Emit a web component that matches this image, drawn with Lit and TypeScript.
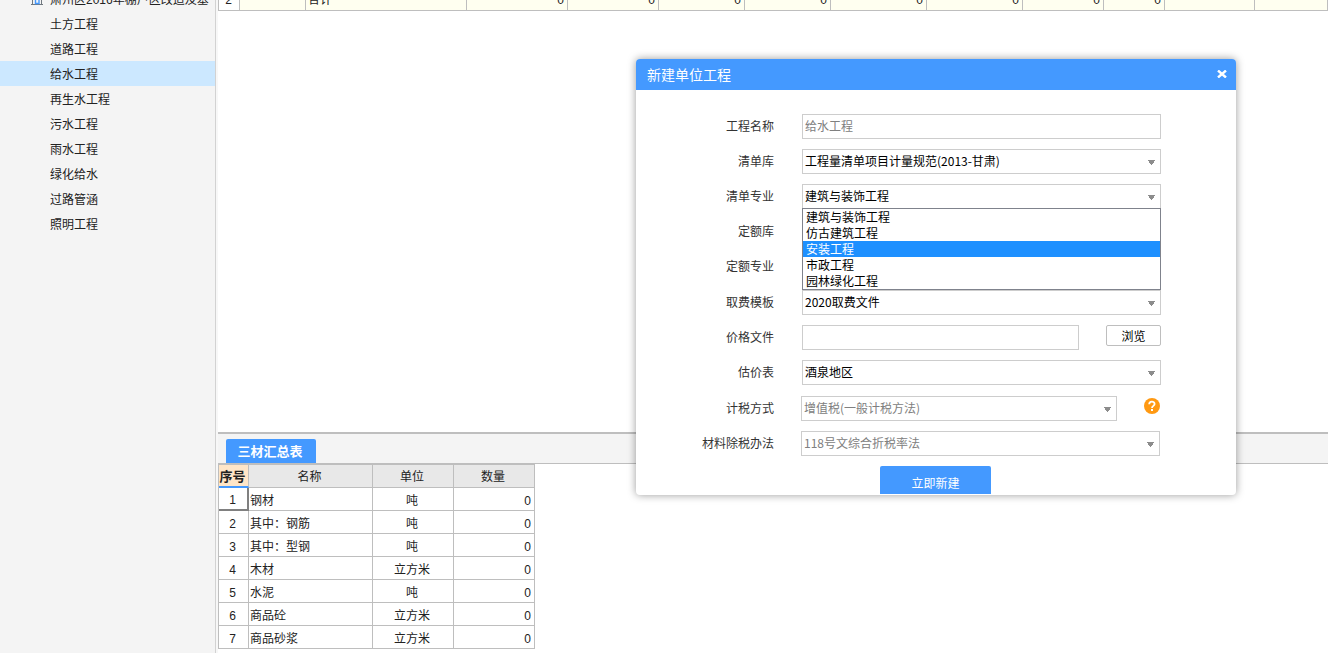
import { LitElement, html, css, svg, nothing } from "lit";
import { customElement, property, state } from "lit/decorators.js";
import { classMap } from "lit/directives/class-map.js";

const PROJECT = "肃州区2016年棚户区改造及基";
const UNITS = ["土方工程", "道路工程", "给水工程", "再生水工程", "污水工程", "雨水工程", "绿化给水", "过路管涵", "照明工程"];
const MATERIALS: [string, string, number][] = [
  ["钢材", "吨", 0],
  ["其中：钢筋", "吨", 0],
  ["其中：型钢", "吨", 0],
  ["木材", "立方米", 0],
  ["水泥", "吨", 0],
  ["商品砼", "立方米", 0],
  ["商品砂浆", "立方米", 0],
];
const SPECIALTIES = ["建筑与装饰工程", "仿古建筑工程", "安装工程", "市政工程", "园林绿化工程"];

const caret = svg`<path d="M0 0h7v1h-1v2h-1v1h-1v1h-1v-1h-1v-1h-1v-2h-1z" fill="#8c8c8c"/>`;

@customElement("project-tree")
export class ProjectTree extends LitElement {
  @state() private selected = "给水工程";

  static styles = css`
    :host { display: block; flex: none; width: 215px; overflow: hidden; background: #f4f4f4; border-right: 1px solid #d2d2d2; }
    .tree { margin: -14px 0 0; padding: 0; list-style: none; }
    .row { display: flex; align-items: center; box-sizing: border-box; height: 25px; padding: 4px 0 0 50px; color: #222; font-size: 12px; line-height: 21px; white-space: nowrap; cursor: default; }
    .root { padding-left: 31px; gap: 7px; }
    .icon { width: 12px; height: 13px; flex: none; margin-bottom: 4px; }
    .selected { background: #cce8ff; }
  `;

  render() {
    return html`<ul class="tree" role="tree">
      <li class="row root" role="treeitem">
        <svg class="icon" viewBox="0 0 12 13" fill="none" aria-hidden="true">
          <path d="M0 12.500H12M1.500 12V1.500H10.500V12" stroke="#70787f" />
          <path d="M4.500 11.500V5.500H8V11.500Z" stroke="#4499ff" stroke-width="1.400" />
        </svg>
        <span>${PROJECT}</span>
      </li>
      ${UNITS.map(
        (u) => html`<li
          role="treeitem"
          class=${classMap({ row: true, selected: u === this.selected })}
          @click=${() => (this.selected = u)}
        >${u}</li>`
      )}
    </ul>`;
  }
}

@customElement("cost-sheet")
export class CostSheet extends LitElement {
  static styles = css`
    :host { display: block; flex: 1; min-height: 0; overflow: hidden; background: #fff; }
    .sheet { width: 100%; margin-top: -13px; table-layout: fixed; border-collapse: separate; border-spacing: 0; border-left: 1px solid #bebebe; }
    td { height: 24px; box-sizing: border-box; padding: 4px 3px 0 2px; border: solid #bebebe; border-width: 0 1px 1px 0; background: #fffff0; color: #222; font-size: 12px; line-height: 19px; text-align: right; }
    .no { background: #fff; text-align: center; }
    .name { text-align: left; }
    .c21 { width: 21px; } .c66 { width: 66px; } .c161 { width: 161px; } .c101 { width: 101px; }
    .c91 { width: 91px; } .c86 { width: 86px; } .c96 { width: 96px; } .c81 { width: 81px; }
    .c61 { width: 61px; } .c90 { width: 90px; }
  `;

  render() {
    const cols = [21, 66, 161, 101, 91, 86, 86, 96, 96, 81, 61, 90];
    return html`<table class="sheet">
      <colgroup>${cols.map((c) => html`<col class="c${c}" />`)}<col /></colgroup>
      <tbody>
        <tr>
          <td class="no">2</td><td></td><td class="name">合计</td>
          ${Array.from({ length: 8 }, () => html`<td>0</td>`)}
          <td></td><td></td>
        </tr>
      </tbody>
    </table>`;
  }
}

@customElement("material-summary")
export class MaterialSummary extends LitElement {
  static styles = css`
    :host { display: block; flex: none; padding-bottom: 4px; background: #fff; border-top: 2px solid #bebebe; }
    .tabs { display: flex; padding: 5px 8px 0; background: #f4f4f4; border-bottom: 1px solid #bebebe; }
    .tab { height: 24px; width: 90px; padding: 2px 2px 0 0; border: 0; border-radius: 2px 2px 0 0; background: #4499ff; color: #fff; font-family: inherit; font-size: 13px; font-weight: bold; line-height: 22px; }
    table { width: 317px; table-layout: fixed; border-collapse: separate; border-spacing: 0; border: solid #bebebe; border-width: 1px 0 0 1px; color: #222; font-size: 12px; }
    th, td { box-sizing: border-box; height: 23px; border: solid #bebebe; border-width: 0 1px 1px 0; }
    th { padding: 2px 2px 0 0; background: #e8e8e8; font-weight: normal; line-height: 20px; }
    td { padding: 4px 3px 0 1px; line-height: 18px; }
    .seq { width: 30px; }
    .name { width: 124px; }
    .unit, .qty { width: 81px; }
    .active { background: #ffe6c8; border-bottom: 2px solid #4499ff; font-size: 13px; font-weight: bold; line-height: 19px; white-space: nowrap; }
    .center { text-align: center; }
    .right { text-align: right; }
    .current { padding-right: 2px; border: solid #808080; border-width: 0 2px 2px 0; line-height: 17px; }
  `;

  render() {
    return html`
      <div class="tabs" role="tablist">
        <button class="tab" role="tab" aria-selected="true">三材汇总表</button>
      </div>
      <table>
        <thead>
          <tr><th class="seq active">序号</th><th class="name">名称</th><th class="unit">单位</th><th class="qty">数量</th></tr>
        </thead>
        <tbody>
          ${MATERIALS.map(
            ([name, unit, qty], i) => html`<tr>
              <td class=${classMap({ center: true, current: i === 0 })}>${i + 1}</td>
              <td>${name}</td>
              <td class="center">${unit}</td>
              <td class="right">${qty}</td>
            </tr>`
          )}
        </tbody>
      </table>
    `;
  }
}

@customElement("unit-dialog")
export class UnitDialog extends LitElement {
  @property({ type: Array }) specialties = SPECIALTIES;
  @state() private hovered = 2;

  static styles = css`
    :host { display: block; width: 600px; border-radius: 4px; background: #fff; box-shadow: 0 0 8px rgba(0, 0, 0, 0.4); color: #333; }
    .head { display: flex; align-items: center; justify-content: space-between; height: 31px; padding: 0 9px 0 11px; border-radius: 4px 4px 0 0; background: #4499ff; color: #fff; }
    .title { margin: 0; font-size: 14px; font-weight: normal; line-height: 31px; }
    button { font-family: inherit; font-size: 12px; }
    .close { display: flex; padding: 0 0 2px; border: 0; background: none; }
    .form { display: grid; gap: 11px; padding-top: 24px; }
    .group { display: grid; grid-template-columns: 138px 1fr; gap: 10px 28px; padding-right: 75px; }
    .tax { column-gap: 27px; padding-right: 76px; }
    label { font-size: 12px; line-height: 23px; text-align: right; white-space: nowrap; }
    .control { position: relative; height: 25px; min-width: 0; }
    .split { display: flex; align-items: flex-start; justify-content: space-between; gap: 27px; }
    .split .grow { flex: 1; }
    input, select { display: block; width: 100%; height: 25px; box-sizing: border-box; margin: 0; padding: 0 2px 2px; border: 1px solid #cdcdcd; border-radius: 0; background: #fff; color: #000; font-family: inherit; font-size: 12px; line-height: 21px; appearance: none; outline: 0; opacity: 1; }
    :disabled { color: #808080; }
    .caret { position: absolute; right: 6px; top: 11px; width: 7px; height: 5px; pointer-events: none; }
    .list { position: absolute; z-index: 1; top: 24px; left: 0; right: 0; margin: 0; padding: 0; border: 1px solid #7f828c; background: #fff; color: #000; list-style: none; font-size: 12px; line-height: 16px; }
    .item { height: 16px; padding-left: 3px; }
    .hover { background: #1e90ff; color: #fff; }
    .browse { width: 55px; height: 21px; padding: 0; border: 1px solid #bebebe; border-radius: 2px; background: #fff; color: #000; line-height: 19px; }
    .help { display: flex; padding: 2px 0 0; border: 0; background: none; }
    .foot { display: flex; justify-content: center; height: 28px; margin: 10px 1px 1px 0; overflow: hidden; }
    .submit { flex: none; width: 111px; height: 33px; padding: 0; border: 0; border-radius: 2px; background: #4499ff; color: #fff; }
  `;

  private select(id: string, value = "", disabled = false, list: string[] = []) {
    return html`<div class="control grow">
      <select id=${id} ?disabled=${disabled}>${value ? html`<option>${value}</option>` : nothing}</select>
      <svg class="caret" viewBox="0 0 7 5" shape-rendering="crispEdges" aria-hidden="true">${caret}</svg>
      ${list.length
        ? html`<ul class="list" role="listbox">
            ${list.map(
              (t, i) => html`<li
                role="option"
                class=${classMap({ item: true, hover: i === this.hovered })}
                @mouseenter=${() => (this.hovered = i)}
              >${t}</li>`
            )}
          </ul>`
        : nothing}
    </div>`;
  }

  render() {
    return html`
      <header class="head">
        <h2 class="title">新建单位工程</h2>
        <button class="close" aria-label="关闭">
          <svg width="10" height="8" viewBox="0 0 10 8" aria-hidden="true">
            <path d="M1 0.500L9 7.500M9 0.500L1 7.500" stroke="#fff" stroke-width="2.400" />
          </svg>
        </button>
      </header>
      <form class="form" @submit=${(e: Event) => e.preventDefault()}>
        <div class="group">
          <label for="name">工程名称</label>
          <div class="control"><input id="name" value="给水工程" disabled /></div>
          <label for="bill">清单库</label>
          ${this.select("bill", "工程量清单项目计量规范(2013-甘肃)")}
          <label for="specialty">清单专业</label>
          ${this.select("specialty", "建筑与装饰工程", false, this.specialties)}
          <label for="quota">定额库</label>
          ${this.select("quota")}
          <label for="quota-specialty">定额专业</label>
          ${this.select("quota-specialty")}
        </div>
        <div class="group">
          <label for="fee">取费模板</label>
          ${this.select("fee", "2020取费文件")}
          <label for="price">价格文件</label>
          <div class="split">
            <div class="control grow"><input id="price" /></div>
            <button class="browse" type="button">浏览</button>
          </div>
          <label for="estimate">估价表</label>
          ${this.select("estimate", "酒泉地区")}
        </div>
        <div class="group tax">
          <label for="tax">计税方式</label>
          <div class="split">
            ${this.select("tax", "增值税(一般计税方法)", true)}
            <button class="help" type="button" aria-label="帮助">
              <svg width="16" height="16" viewBox="0 0 16 16" fill="none" aria-hidden="true">
                <circle cx="8" cy="8" r="8" fill="#ff9912" />
                <path d="M5.200 6.300C5.200 2.900 10.600 2.900 10.600 6C10.600 7.900 8 7.900 8 10" stroke="#fff" stroke-width="1.800" />
                <path d="M7 11h2v2h-2z" fill="#fff" />
              </svg>
            </button>
          </div>
          <label for="deduct">材料除税办法</label>
          ${this.select("deduct", "118号文综合折税率法", true)}
        </div>
      </form>
      <footer class="foot"><button class="submit">立即新建</button></footer>
    `;
  }
}

@customElement("app-root")
export class AppRoot extends LitElement {
  static styles = css`
    :host { display: flex; gap: 2px; position: relative; height: 100vh; overflow: hidden; background: #f7f7f7; font-family: "Liberation Sans", "Noto Sans CJK SC", sans-serif; font-size: 12px; }
    .work { display: flex; flex: 1; flex-direction: column; min-width: 0; }
    .dialog { position: absolute; top: 59px; right: 92px; font-family: "Noto Sans CJK SC", sans-serif; }
  `;

  render() {
    return html`
      <project-tree></project-tree>
      <main class="work">
        <cost-sheet></cost-sheet>
        <material-summary></material-summary>
      </main>
      <unit-dialog class="dialog" role="dialog" aria-label="新建单位工程"></unit-dialog>
    `;
  }
}
